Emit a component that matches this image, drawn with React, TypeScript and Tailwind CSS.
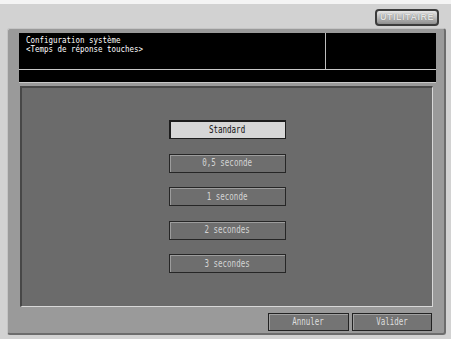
import React from "react";

const mono = "font-['DejaVu_Sans_Mono','Liberation_Mono',monospace]";

function Txt({ children, className = "" }: { children: React.ReactNode; className?: string }) {
  return (
    <span className={`inline-block origin-center scale-x-[0.75] whitespace-pre ${className}`}>{children}</span>
  );
}

function OptionBtn({ label, active }: { label: string; active?: boolean }) {
  if (active) {
    return (
      <div className="w-[117px] h-[19px] flex items-center justify-center bg-[#d6d6d6] border border-[#1c1c1c] border-t-2 border-l-2 text-[10px] leading-none text-[#111]">
        <Txt>{label}</Txt>
      </div>
    );
  }
  return (
    <div className="w-[117px] h-[19px] flex items-center justify-center bg-[#6e6e6e] border border-[#262626] shadow-[inset_1px_1px_0_#9c9c9c] text-[10px] leading-none text-[#d4d4d4]">
      <Txt>{label}</Txt>
    </div>
  );
}

function BottomBtn({ label, w }: { label: string; w: string }) {
  return (
    <div className={`${w} h-[18px] flex items-center justify-center bg-[#747474] border border-[#222] shadow-[inset_1px_1px_0_#a0a0a0] text-[10px] leading-none text-[#dedede]`}>
      <Txt>{label}</Txt>
    </div>
  );
}

export default function App() {
  return (
    <div className={`w-[451px] h-[339px] bg-[#d2d2d2] overflow-hidden flex flex-col ${mono}`}>
      <div className="h-[4px] bg-[#f4f4f4]" />
      <div className="h-[24px] flex justify-end pr-[12px] pt-[5px]">
        <div className="w-[64px] h-[17px] rounded-[4px] border-2 border-[#3c3c3c] bg-gradient-to-b from-[#e6e6e6] via-[#bdbdbd] to-[#8e8e8e] flex items-center justify-center">
          <span className="font-['Liberation_Sans',sans-serif] font-bold text-[9px] leading-none text-[#e4e4e4] tracking-[0.5px] [text-shadow:0_0_1px_#666]">
            UTILITAIRE
          </span>
        </div>
      </div>
      <div className="ml-[7px] w-[439px] h-[307px] bg-[#9a9a9a] rounded-[3px] border-t border-l border-t-[#c4c4c4] border-l-[#c4c4c4] border-r-2 border-b-2 border-r-[#6c6c6c] border-b-[#6c6c6c] flex flex-col">
        <div className="ml-[11px] mt-[4px] w-[417px] bg-black flex flex-col">
          <div className="h-[36px] flex">
            <div className="w-[306px] pl-[7px] pt-[3px] text-[9px] leading-[9px] text-white flex flex-col items-start">
              <span className="inline-block h-[9px] origin-left scale-x-[0.83] whitespace-pre">Configuration système</span>
              <span className="inline-block h-[9px] origin-left scale-x-[0.83] whitespace-pre">{"<Temps de réponse touches>"}</span>
            </div>
            <div className="w-[1px] bg-[#bdbdbd]" />
            <div className="flex-1" />
          </div>
          <div className="h-[1px] bg-[#c8c8c8]" />
          <div className="h-[12px]" />
          <div className="h-[1px] bg-[#c8c8c8]" />
        </div>
        <div className="ml-[12px] mt-[3px] w-[413px] h-[221px] bg-[#6b6b6b] border-t-2 border-l-2 border-t-[#474747] border-l-[#474747] border-r border-b border-r-[#d8d8d8] border-b-[#d8d8d8] flex flex-col items-center pt-[32px] gap-[14.5px]">
          <OptionBtn label="Standard" active />
          <OptionBtn label="0,5 seconde" />
          <OptionBtn label="1 seconde" />
          <OptionBtn label="2 secondes" />
          <OptionBtn label="3 secondes" />
        </div>
        <div className="flex justify-end gap-[3px] pr-[12px] mt-[6px]">
          <BottomBtn label="Annuler" w="w-[81px]" />
          <BottomBtn label="Valider" w="w-[80px]" />
        </div>
      </div>
    </div>
  );
}
